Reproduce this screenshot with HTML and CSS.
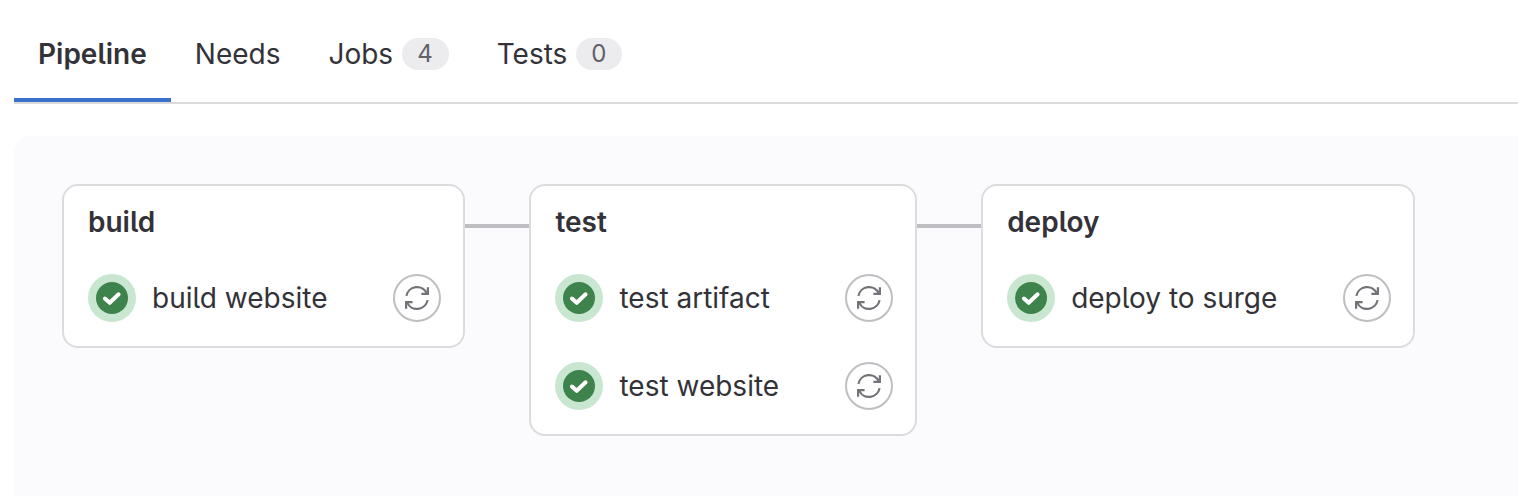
FILE: index.html
```html
<!DOCTYPE html>
<html lang="en">
<head>
<meta charset="utf-8">
<title>Pipeline</title>
<link rel="stylesheet" href="styles.css">
</head>
<body>
<svg class="sprite" aria-hidden="true">
  <symbol id="check" viewBox="0 0 32 32">
    <path d="M8.9 16.5 13.7 20.8 22.6 12.3" fill="none" stroke="#fff" stroke-width="4" stroke-linecap="round" stroke-linejoin="round"/>
  </symbol>
  <symbol id="retry" viewBox="0 0 24 24">
    <g fill="none" stroke="currentColor" stroke-width="2.2">
      <path d="M1.4 9.9A10.8 10.8 0 0 1 21.9 7.6"/>
      <path d="M22.9 1.3V7.9H16.4"/>
      <path d="M22.6 14.1A10.8 10.8 0 0 1 2.1 16.4"/>
      <path d="M1.1 22.7V16.1H7.6"/>
    </g>
  </symbol>
</svg>
<main class="page">
  <nav class="tabs" aria-label="Pipeline views">
    <a class="tab tab-active" href="#pipeline" aria-current="page">Pipeline</a>
    <a class="tab" href="#needs">Needs</a>
    <a class="tab" href="#jobs">Jobs <span class="badge">4</span></a>
    <a class="tab" href="#tests">Tests <span class="badge">0</span></a>
  </nav>
  <section class="graph" id="pipeline">
    <article class="stage">
      <h2 class="stage-name">build</h2>
      <ul class="jobs">
        <li class="job"><span class="status"><svg class="status-icon"><use href="#check"/></svg></span><span class="job-name">build website</span><button class="retry" type="button" aria-label="Retry build website"><svg class="retry-icon"><use href="#retry"/></svg></button></li>
      </ul>
    </article>
    <div class="link"></div>
    <article class="stage">
      <h2 class="stage-name">test</h2>
      <ul class="jobs">
        <li class="job"><span class="status"><svg class="status-icon"><use href="#check"/></svg></span><span class="job-name">test artifact</span><button class="retry" type="button" aria-label="Retry test artifact"><svg class="retry-icon"><use href="#retry"/></svg></button></li>
        <li class="job"><span class="status"><svg class="status-icon"><use href="#check"/></svg></span><span class="job-name">test website</span><button class="retry" type="button" aria-label="Retry test website"><svg class="retry-icon"><use href="#retry"/></svg></button></li>
      </ul>
    </article>
    <div class="link"></div>
    <article class="stage">
      <h2 class="stage-name">deploy</h2>
      <ul class="jobs">
        <li class="job"><span class="status"><svg class="status-icon"><use href="#check"/></svg></span><span class="job-name">deploy to surge</span><button class="retry" type="button" aria-label="Retry deploy to surge"><svg class="retry-icon"><use href="#retry"/></svg></button></li>
      </ul>
    </article>
  </section>
</main>
</body>
</html>
```
FILE: styles.css
```css
* {
  box-sizing: border-box;
}

body {
  margin: 0;
  background: #fff;
  color: #333238;
  font-family: Inter, "Liberation Sans", sans-serif;
  font-size: 28px;
  line-height: 32px;
  font-feature-settings: "cv05";
}

.sprite {
  display: none;
}

.page {
  display: flex;
  flex-direction: column;
  min-height: 100vh;
  padding: 6px 0 0 14px;
}

.tabs {
  display: flex;
  border-bottom: 2px solid #dcdcde;
}

.tab {
  display: flex;
  align-items: center;
  gap: 9px;
  padding: 32px 24px 28px;
  border-bottom: 4px solid transparent;
  color: inherit;
  text-decoration: none;
}

.tab-active {
  border-bottom-color: #3771c8;
  font-weight: 600;
}

.badge {
  padding: 0 16px 0 15px;
  border-radius: 16px;
  background: #ececef;
  color: #626168;
  font-size: 24px;
}

.graph {
  display: flex;
  flex: 1;
  align-items: flex-start;
  margin-top: 32px;
  padding: 48px;
  border-radius: 16px 0 0 0;
  background: #fbfafd;
}

.stage {
  padding: 20px 22px 24px 24px;
  border: 2px solid #dcdcde;
  border-radius: 16px;
  background: #fff;
}

.stage-name {
  margin: 0 0 36px;
  font-size: 28px;
  font-weight: 600;
}

.link {
  width: 64px;
  height: 4px;
  margin-top: 40px;
  background: #bfbfc3;
}

.jobs {
  display: flex;
  flex-direction: column;
  gap: 40px;
  margin: 0;
  padding: 0;
  list-style: none;
}

.job {
  display: flex;
  align-items: center;
  gap: 16px;
}

.status {
  display: flex;
  padding: 8px;
  border-radius: 50%;
  background: #c9e6d0;
}

.status-icon {
  width: 32px;
  height: 32px;
  border-radius: 50%;
  background: #3d834b;
}

.job-name {
  flex: 1;
  margin-right: 50px;
  white-space: nowrap;
}

.retry {
  display: flex;
  align-items: center;
  justify-content: center;
  width: 48px;
  height: 48px;
  padding: 0;
  border: 2px solid #bfbfc3;
  border-radius: 50%;
  background: #fff;
  color: #737278;
}

.retry-icon {
  width: 24px;
  height: 24px;
}
```
